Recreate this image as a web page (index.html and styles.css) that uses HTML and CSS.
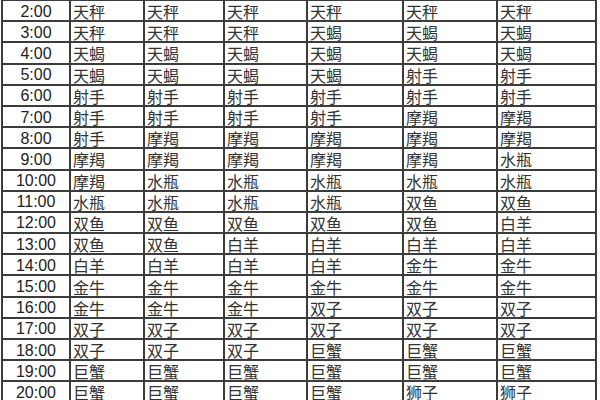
FILE: index.html
```html
<!DOCTYPE html>
<html lang="zh">
<head>
<meta charset="utf-8">
<link rel="stylesheet" href="styles.css">
</head>
<body>
<div class="table">
<div class="t">2:00</div><div>天秤</div><div>天秤</div><div>天秤</div><div>天秤</div><div>天秤</div><div>天秤</div>
<div class="t">3:00</div><div>天秤</div><div>天秤</div><div>天秤</div><div>天蝎</div><div>天蝎</div><div>天蝎</div>
<div class="t">4:00</div><div>天蝎</div><div>天蝎</div><div>天蝎</div><div>天蝎</div><div>天蝎</div><div>天蝎</div>
<div class="t">5:00</div><div>天蝎</div><div>天蝎</div><div>天蝎</div><div>天蝎</div><div>射手</div><div>射手</div>
<div class="t">6:00</div><div>射手</div><div>射手</div><div>射手</div><div>射手</div><div>射手</div><div>射手</div>
<div class="t">7:00</div><div>射手</div><div>射手</div><div>射手</div><div>射手</div><div>摩羯</div><div>摩羯</div>
<div class="t">8:00</div><div>射手</div><div>摩羯</div><div>摩羯</div><div>摩羯</div><div>摩羯</div><div>摩羯</div>
<div class="t">9:00</div><div>摩羯</div><div>摩羯</div><div>摩羯</div><div>摩羯</div><div>摩羯</div><div>水瓶</div>
<div class="t">10:00</div><div>摩羯</div><div>水瓶</div><div>水瓶</div><div>水瓶</div><div>水瓶</div><div>水瓶</div>
<div class="t">11:00</div><div>水瓶</div><div>水瓶</div><div>水瓶</div><div>水瓶</div><div>双鱼</div><div>双鱼</div>
<div class="t">12:00</div><div>双鱼</div><div>双鱼</div><div>双鱼</div><div>双鱼</div><div>双鱼</div><div>白羊</div>
<div class="t">13:00</div><div>双鱼</div><div>双鱼</div><div>白羊</div><div>白羊</div><div>白羊</div><div>白羊</div>
<div class="t">14:00</div><div>白羊</div><div>白羊</div><div>白羊</div><div>白羊</div><div>金牛</div><div>金牛</div>
<div class="t">15:00</div><div>金牛</div><div>金牛</div><div>金牛</div><div>金牛</div><div>金牛</div><div>金牛</div>
<div class="t">16:00</div><div>金牛</div><div>金牛</div><div>金牛</div><div>双子</div><div>双子</div><div>双子</div>
<div class="t">17:00</div><div>双子</div><div>双子</div><div>双子</div><div>双子</div><div>双子</div><div>双子</div>
<div class="t">18:00</div><div>双子</div><div>双子</div><div>双子</div><div>巨蟹</div><div>巨蟹</div><div>巨蟹</div>
<div class="t">19:00</div><div>巨蟹</div><div>巨蟹</div><div>巨蟹</div><div>巨蟹</div><div>巨蟹</div><div>巨蟹</div>
<div class="t">20:00</div><div>巨蟹</div><div>巨蟹</div><div>巨蟹</div><div>巨蟹</div><div>狮子</div><div>狮子</div>
</div>
</body>
</html>
```

FILE: styles.css
```css
html, body {
  margin: 0;
  padding: 0;
  background: #ffffff;
  overflow: hidden;
}
.table {
  margin: -1px 0 0 1px;
  width: 596px;
  box-sizing: border-box;
  display: grid;
  grid-template-columns: 66px 72px 78px 81px 94px 92px 97px;
  grid-auto-rows: 19.2px;
  gap: 2px;
  padding: 2px;
  background: #3c3c3c;
  font-family: "Noto Sans CJK SC", "Liberation Sans", sans-serif;
  font-size: 16px;
  color: #333333;
}
.table > div {
  background: #ffffff;
  display: flex;
  align-items: center;
  line-height: 18px;
  padding: 1px 0 0 2px;
  box-sizing: border-box;
  white-space: nowrap;
}
.table > .t {
  font-family: "Liberation Sans", Arial, sans-serif;
  justify-content: center;
  padding: 2px 0 0 0;
  color: #222222;
}
```
